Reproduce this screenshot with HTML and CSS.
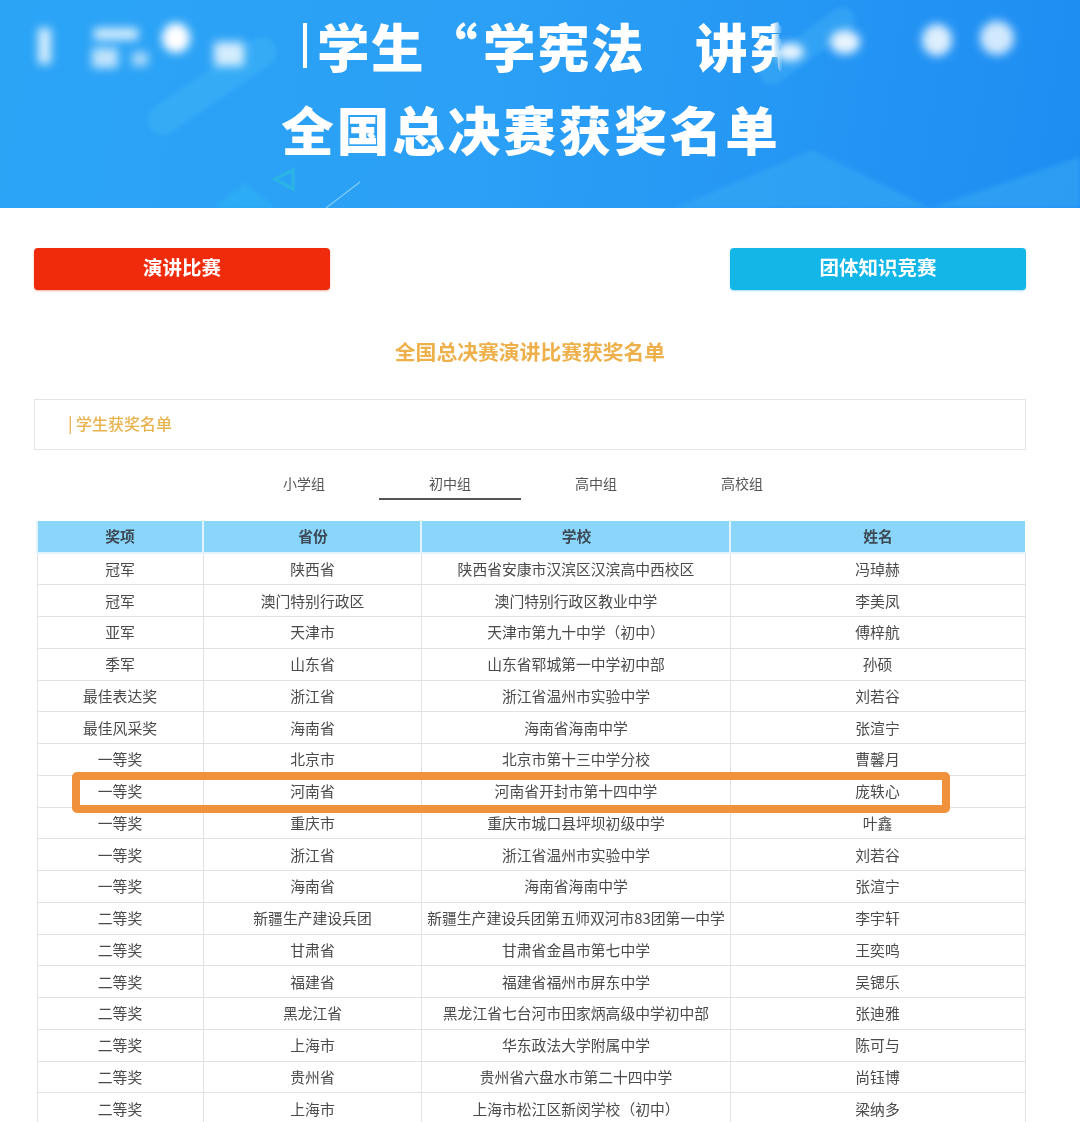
FILE: index.html
```html
<!DOCTYPE html>
<html lang="zh-CN">
<head>
<meta charset="utf-8">
<title>全国总决赛获奖名单</title>
<link rel="stylesheet" href="styles.css">
</head>
<body>
<div class="page">
  <header class="banner">
    <svg class="banner-art" viewBox="0 0 1080 208" aria-hidden="true">
      <defs>
        <filter id="b2" filterUnits="userSpaceOnUse" x="0" y="0" width="1080" height="208"><feGaussianBlur stdDeviation="2"/></filter>
        <filter id="b4" filterUnits="userSpaceOnUse" x="0" y="0" width="1080" height="208"><feGaussianBlur stdDeviation="5"/></filter>
      </defs>
      <path d="M162 120 L262 52" stroke="#45b9f7" stroke-width="30" stroke-linecap="round" fill="none" opacity=".4" filter="url(#b2)"/>
      <path d="M772 72 L842 20" stroke="#45b4f6" stroke-width="26" stroke-linecap="round" fill="none" opacity=".4" filter="url(#b2)"/>
      <path d="M675 208 L812 150 L930 208 Z" fill="#3db0f4" opacity=".45" filter="url(#b2)"/>
      <path d="M930 208 L1080 157 V208 Z" fill="#3db0f4" opacity=".45" filter="url(#b2)"/>
      <path d="M213 208 L245 183 L275 208 Z" fill="#2fb6f3" opacity=".5" filter="url(#b2)"/>
      <path d="M293 170 L275 179 L293 189 Z" fill="none" stroke="#2cb8e2" stroke-width="3.5" opacity=".8"/>
      <path d="M326 208 L360 182" stroke="#7fd0f8" stroke-width="1.2"/>
      <g fill="#fff" filter="url(#b4)">
        <rect x="38" y="28" width="13" height="36" opacity=".8"/>
        <rect x="94" y="28" width="44" height="12" opacity=".8"/>
        <rect x="92" y="48" width="26" height="20" opacity=".7"/>
        <rect x="132" y="52" width="16" height="14" opacity=".6"/>
        <ellipse cx="176" cy="38" rx="14" ry="15"/>
        <rect x="214" y="42" width="30" height="24" opacity=".8"/>
        <ellipse cx="845" cy="42" rx="15" ry="12" opacity=".9"/>
        <ellipse cx="790" cy="52" rx="14" ry="9" opacity=".9"/>
        <ellipse cx="937" cy="40" rx="15" ry="16" opacity=".85"/>
        <ellipse cx="997" cy="38" rx="17" ry="17" opacity=".8"/>
      </g>
    </svg>
    <h1 class="line-one"><span class="bar"></span><span>学生</span><span class="quote">“</span><span>学宪法</span><span class="gap">讲<span class="cut">宪</span></span></h1>
    <h2 class="line-two">全国总决赛获奖名单</h2>
  </header>

  <main class="content">
    <div class="switch">
      <a class="btn btn-red">演讲比赛</a>
      <a class="btn btn-cyan">团体知识竞赛</a>
    </div>
    <h3 class="title">全国总决赛演讲比赛获奖名单</h3>
    <div class="section"><span class="section-label">| 学生获奖名单</span></div>
    <nav class="tabs">
      <a class="tab">小学组</a>
      <a class="tab tab-on">初中组</a>
      <a class="tab">高中组</a>
      <a class="tab">高校组</a>
    </nav>
    <div class="table-wrap">
      <table class="list">
        <colgroup><col class="c1"><col class="c2"><col class="c3"><col class="c4"></colgroup>
        <thead><tr><th>奖项</th><th>省份</th><th>学校</th><th>姓名</th></tr></thead>
        <tbody>
          <tr><td>冠军</td><td>陕西省</td><td>陕西省安康市汉滨区汉滨高中西校区</td><td>冯琸赫</td></tr>
          <tr><td>冠军</td><td>澳门特别行政区</td><td>澳门特别行政区教业中学</td><td>李美凤</td></tr>
          <tr><td>亚军</td><td>天津市</td><td>天津市第九十中学（初中）</td><td>傅梓航</td></tr>
          <tr><td>季军</td><td>山东省</td><td>山东省郓城第一中学初中部</td><td>孙硕</td></tr>
          <tr><td>最佳表达奖</td><td>浙江省</td><td>浙江省温州市实验中学</td><td>刘若谷</td></tr>
          <tr><td>最佳风采奖</td><td>海南省</td><td>海南省海南中学</td><td>张渲宁</td></tr>
          <tr><td>一等奖</td><td>北京市</td><td>北京市第十三中学分校</td><td>曹馨月</td></tr>
          <tr><td>一等奖</td><td>河南省</td><td>河南省开封市第十四中学</td><td>庞轶心</td></tr>
          <tr><td>一等奖</td><td>重庆市</td><td>重庆市城口县坪坝初级中学</td><td>叶鑫</td></tr>
          <tr><td>一等奖</td><td>浙江省</td><td>浙江省温州市实验中学</td><td>刘若谷</td></tr>
          <tr><td>一等奖</td><td>海南省</td><td>海南省海南中学</td><td>张渲宁</td></tr>
          <tr><td>二等奖</td><td>新疆生产建设兵团</td><td>新疆生产建设兵团第五师双河市83团第一中学</td><td>李宇轩</td></tr>
          <tr><td>二等奖</td><td>甘肃省</td><td>甘肃省金昌市第七中学</td><td>王奕鸣</td></tr>
          <tr><td>二等奖</td><td>福建省</td><td>福建省福州市屏东中学</td><td>吴锶乐</td></tr>
          <tr><td>二等奖</td><td>黑龙江省</td><td>黑龙江省七台河市田家炳高级中学初中部</td><td>张迪雅</td></tr>
          <tr><td>二等奖</td><td>上海市</td><td>华东政法大学附属中学</td><td>陈可与</td></tr>
          <tr><td>二等奖</td><td>贵州省</td><td>贵州省六盘水市第二十四中学</td><td>尚钰博</td></tr>
          <tr><td>二等奖</td><td>上海市</td><td>上海市松江区新闵学校（初中）</td><td>梁纳多</td></tr>
        </tbody>
      </table>
      <div class="mark"></div>
    </div>
  </main>
</div>
</body>
</html>
```
FILE: styles.css
```css
html, body {
  margin: 0;
  height: 1122px;
  overflow: hidden;
  background: #fff;
}
body {
  font-family: "Noto Sans CJK SC", "Noto Sans", sans-serif;
  color: #444;
}
.page {
  filter: blur(0.35px);
}
.banner {
  position: relative;
  height: 208px;
  overflow: hidden;
  background: linear-gradient(100deg, #2ba4f6 0%, #2ba0f6 45%, #1e8df2 100%);
  color: #fff;
}
.banner-art {
  position: absolute;
  inset: 0;
  width: 100%;
  height: 100%;
}
.line-one, .line-two {
  position: relative;
  margin: 0;
  font-weight: 900;
  white-space: nowrap;
}
.line-one {
  display: flex;
  align-items: center;
  height: 62px;
  padding: 14px 0 0 303px;
  font-size: 52.5px;
  line-height: 62px;
  letter-spacing: 1.5px;
}
.bar {
  width: 4px;
  height: 45px;
  margin-right: 10px;
  background: #fff;
}
.quote {
  width: 58px;
  text-indent: 0;
}
.gap {
  margin-left: 50px;
}
.cut {
  -webkit-mask-image: linear-gradient(90deg, #000 45%, transparent 62%);
  mask-image: linear-gradient(90deg, #000 45%, transparent 62%);
}
.line-two {
  margin-top: 21px;
  padding-right: 18px;
  text-align: center;
  font-size: 52.5px;
  line-height: 62px;
  letter-spacing: 3px;
}
.content {
  padding: 40px 54px 0 34px;
}
.switch {
  display: flex;
  justify-content: space-between;
}
.btn {
  width: 296px;
  height: 42px;
  border-radius: 4px;
  text-align: center;
  font-size: 19.5px;
  font-weight: 700;
  line-height: 37px;
  color: #fff;
}
.btn-red {
  background: #ef2b0c;
  box-shadow: 0 1px 2px rgba(200, 60, 30, .4);
}
.btn-cyan {
  background: #12b7e8;
  box-shadow: 0 1px 2px rgba(30, 170, 220, .4);
}
.title {
  margin: 45px 0 0;
  text-align: center;
  font-size: 20.8px;
  font-weight: 700;
  line-height: 32px;
  color: #eeb04a;
}
.section {
  height: 49px;
  margin-top: 32px;
  padding-left: 33px;
  border: 1px solid #e4e4e4;
  line-height: 47px;
}
.section-label {
  font-size: 16px;
  font-weight: 500;
  color: #e7b34f;
}
.tabs {
  display: flex;
  gap: 4px;
  margin-top: 17px;
  padding-left: 199px;
}
.tab {
  width: 142px;
  height: 31px;
  text-align: center;
  font-size: 14px;
  line-height: 32px;
  color: #555;
}
.tab-on {
  border-bottom: 2px solid #555;
}
.table-wrap {
  position: relative;
  margin: 21px 1px 0 2px;
}
.list {
  width: 988px;
  table-layout: fixed;
  border-collapse: collapse;
  font-size: 14.8px;
}
.c1 { width: 166px; }
.c2 { width: 218px; }
.c3 { width: 309px; }
.c4 { width: 295px; }
.list th {
  box-sizing: border-box;
  height: 32px;
  padding: 0 0 2px;
  border-left: 2px solid #e2f3fb;
  border-bottom: 2px solid #e2f3fb;
  background: #8ad6fb;
  font-size: 14.8px;
  font-weight: 700;
  color: #3d4a55;
}
.list th:nth-child(2),
.list th:nth-child(3),
.list td:nth-child(2),
.list td:nth-child(3) {
  padding-left: 2px;
}
.list td {
  box-sizing: border-box;
  height: 31.76px;
  padding-top: 0;
  padding-bottom: 1px;
  border: 1px solid #dfe3e6;
  text-align: center;
  color: #4a4a4a;
  white-space: nowrap;
}
.mark {
  position: absolute;
  left: 36px;
  top: 251px;
  width: 878px;
  height: 41px;
  box-sizing: border-box;
  border: 8px solid #f0913c;
  border-radius: 5px;
}
```
